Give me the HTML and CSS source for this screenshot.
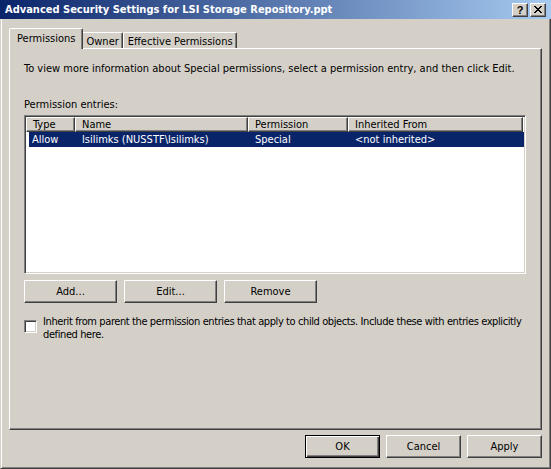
FILE: index.html
```html
<!DOCTYPE html>
<html>
<head>
<meta charset="utf-8">
<title>Advanced Security Settings</title>
<link rel="stylesheet" href="styles.css">
</head>
<body>
<div class="window">
  <div class="titlebar">
    <span class="title">Advanced Security Settings for LSI Storage Repository.ppt</span>
    <div class="caption-btns">
      <div class="cap-btn help">?</div>
      <div class="cap-btn close">
        <svg width="8" height="7" viewBox="0 0 8 7" shape-rendering="crispEdges">
          <path fill="#000" d="M0 0h2v1H0zM6 0h2v1H6zM1 1h2v1H1zM5 1h2v1H5zM2 2h4v1H2zM3 3h2v1H3zM2 4h4v1H2zM1 5h2v1H1zM5 5h2v1H5zM0 6h2v1H0zM6 6h2v1H6z"/>
        </svg>
      </div>
    </div>
  </div>
  <div class="client">
    <div class="tabs">
      <div class="tab selected">Permissions</div>
      <div class="tab">Owner</div>
      <div class="tab">Effective Permissions</div>
    </div>
    <div class="panel">
      <p class="desc">To view more information about Special permissions, select a permission entry, and then click Edit.</p>
      <div class="label">Permission entries:</div>
      <div class="listview">
        <div class="lv-header">
          <div class="hcell c-type">Type</div>
          <div class="hcell c-name">Name</div>
          <div class="hcell c-perm">Permission</div>
          <div class="hcell c-inh">Inherited From</div>
        </div>
        <div class="lv-row selected">
          <div class="cell c-type first">Allow</div>
          <div class="cell c-name">lsilimks (NUSSTF\lsilimks)</div>
          <div class="cell c-perm">Special</div>
          <div class="cell c-inh">&lt;not inherited&gt;</div>
        </div>
      </div>
      <div class="btn-row">
        <div class="btn">Add...</div>
        <div class="btn">Edit...</div>
        <div class="btn">Remove</div>
      </div>
      <div class="check-row">
        <div class="checkbox"></div>
        <div class="check-label">Inherit from parent the permission entries that apply to child objects. Include these with entries explicitly<br>defined here.</div>
      </div>
    </div>
    <div class="footer">
      <div class="btn small default">OK</div>
      <div class="btn small">Cancel</div>
      <div class="btn small">Apply</div>
    </div>
  </div>
</div>
</body>
</html>
```
FILE: styles.css
```css
* { box-sizing: border-box; }
html, body { margin: 0; padding: 0; }
body {
  background: #D4D0C8;
  font-family: "DejaVu Sans Condensed", "DejaVu Sans", sans-serif;
  font-stretch: condensed;
  font-size: 11px;
  line-height: 13px;
  color: #000;
}
.window {
  width: 551px;
  height: 469px;
  display: flex;
  flex-direction: column;
}
.titlebar {
  height: 19px;
  flex: none;
  display: flex;
  align-items: center;
  background: linear-gradient(to right, #0A246A, #A6CAF0);
  padding: 0 5px 0 5px;
}
.title {
  flex: 1;
  color: #fff;
  font-weight: bold;
  font-size: 11px;
  white-space: nowrap;
}
.caption-btns {
  display: flex;
  gap: 2px;
  margin-top: 1px;
}
.cap-btn {
  width: 16px;
  height: 14px;
  background: #D4D0C8;
  border: 1px solid;
  border-color: #fff #404040 #404040 #fff;
  box-shadow: inset -1px -1px #808080;
  display: flex;
  align-items: center;
  justify-content: center;
}
.cap-btn.help {
  font-family: "Liberation Sans", Arial, sans-serif;
  font-weight: bold;
  font-size: 11px;
  line-height: 12px;
  padding-bottom: 1px;
}
.cap-btn svg { display: block; margin-top: -1px; }
.client {
  flex: 1;
  display: flex;
  flex-direction: column;
  border-left: 1px solid #D4D0C8;
  border-right: 1px solid #404040;
  border-bottom: 1px solid #404040;
  box-shadow: inset 1px 0 #fff, inset -1px -1px #808080;
  padding: 0 8px;
}
.tabs {
  height: 20px;
  margin-top: 9px;
  margin-left: 2px;
  display: flex;
  align-items: flex-end;
}
.tab {
  height: 16px;
  padding: 2px 3px 0 4px;
  background: #D4D0C8;
  border-top: 1px solid #fff;
  border-left: 1px solid #fff;
  border-right: 1px solid #404040;
  box-shadow: inset -1px 0 #808080;
  border-radius: 2px 2px 0 0;
  white-space: nowrap;
}
.tab.selected {
  height: 21px;
  margin: 0 -2px -1px -2px;
  padding: 3px 7px 0;
  position: relative;
  z-index: 1;
}
.panel {
  height: 382px;
  flex: none;
  border: 1px solid;
  border-color: #fff #404040 #404040 #fff;
  box-shadow: inset -1px -1px #808080;
  padding: 13px 15px 0 14px;
}
.desc { margin: 0 0 23px; white-space: nowrap; }
.label { margin-bottom: 4px; }
.listview {
  height: 159px;
  background: #fff;
  border: 1px solid;
  border-color: #808080 #fff #fff #808080;
  box-shadow: inset 1px 1px #404040, inset -1px -1px #D4D0C8;
  padding: 1px;
}
.lv-header { display: flex; }
.hcell {
  height: 15px;
  background: #D4D0C8;
  border: 1px solid;
  border-color: #fff #404040 #404040 #fff;
  box-shadow: inset -1px -1px #808080;
  padding: 0 0 0 6px;
  line-height: 13px;
  white-space: nowrap;
}
.c-type { width: 49px; }
.c-name { width: 173px; }
.c-perm { width: 100px; }
.c-inh { width: 175px; }
.lv-row {
  display: flex;
  height: 15px;
  line-height: 15px;
  margin-left: 3px;
}
.lv-row.selected { background: #0A246A; color: #fff; }
.cell { padding-left: 7px; white-space: nowrap; }
.cell.first { width: 46px; padding-left: 3px; }
.btn-row {
  display: flex;
  gap: 7px;
  margin-top: 6px;
}
.btn {
  width: 93px;
  height: 23px;
  background: #D4D0C8;
  border: 1px solid;
  border-color: #fff #404040 #404040 #fff;
  box-shadow: inset -1px -1px #808080;
  display: flex;
  align-items: center;
  justify-content: center;
}
.check-row {
  display: flex;
  align-items: flex-start;
  gap: 6px;
  margin-top: 12px;
}
.checkbox {
  width: 13px;
  height: 13px;
  flex: none;
  margin-top: 5px;
  background: #fff;
  border: 1px solid;
  border-color: #808080 #fff #fff #808080;
  box-shadow: inset 1px 1px #404040, inset -1px -1px #D4D0C8;
}
.check-label { white-space: nowrap; letter-spacing: -0.4px; }
.footer {
  display: flex;
  justify-content: flex-end;
  gap: 6px;
  margin-top: 5px;
}
.btn.small { width: 75px; }
.btn.default {
  border: 1px solid #000;
  box-shadow: inset 1px 1px #fff, inset -1px -1px #404040, inset -2px -2px #808080;
}
```
